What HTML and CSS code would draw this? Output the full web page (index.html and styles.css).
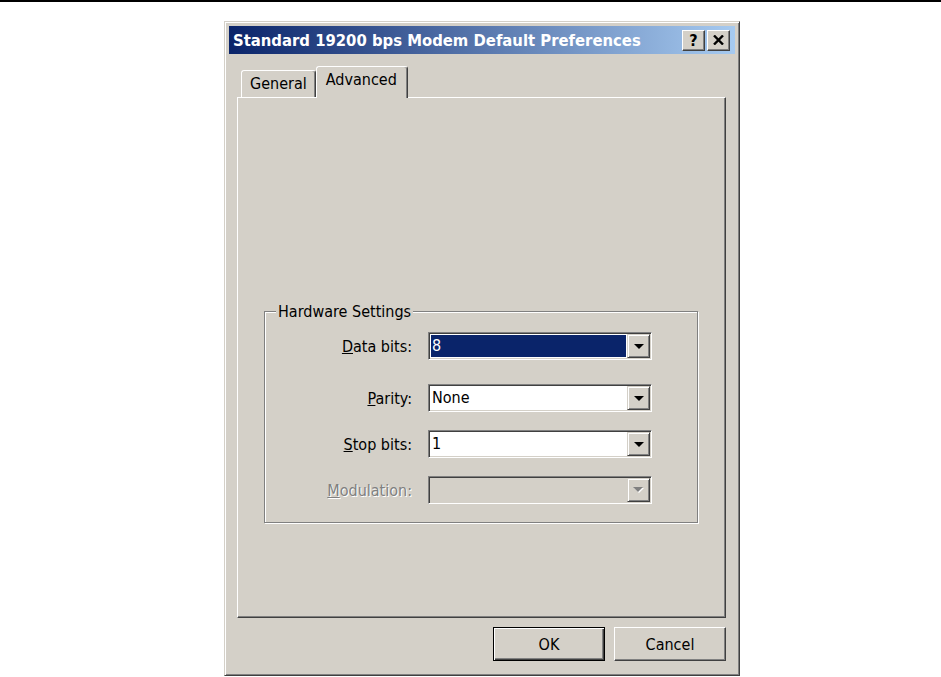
FILE: index.html
```html
<!DOCTYPE html>
<html lang="en">
<head>
    <meta charset="UTF-8">
    <title>Standard 19200 bps Modem Default Preferences</title>
    <link rel="stylesheet" href="styles.css">
</head>
<body>
    <div class="topline"></div>
    <div class="dialog">
        <div class="titlebar">
            <span class="title">Standard 19200 bps Modem Default Preferences</span>
            <div class="caption-btns">
                <div class="cap-btn">?</div>
                <div class="cap-btn">
                    <svg width="11" height="10" viewBox="0 0 11 10">
                        <path d="M1 0.5 L10 9.5 M10 0.5 L1 9.5" stroke="#000" stroke-width="2.4"/>
                    </svg>
                </div>
            </div>
        </div>
        <div class="content">
            <div class="tabs">
                <div class="tab">General</div>
                <div class="tab active">Advanced</div>
            </div>
            <div class="panel">
                <div class="group">
                    <span class="group-title">Hardware Settings</span>
                    <div class="fields">
                        <div class="row">
                            <label class="lbl"><u>D</u>ata bits:</label>
                            <div class="combo">
                                <div class="value selected">8</div>
                                <div class="arrow"><svg width="10" height="5" viewBox="0 0 10 5"><polygon points="0,0 10,0 5,5" fill="#000"/></svg></div>
                            </div>
                        </div>
                        <div class="row wide">
                            <label class="lbl"><u>P</u>arity:</label>
                            <div class="combo">
                                <div class="value">None</div>
                                <div class="arrow"><svg width="10" height="5" viewBox="0 0 10 5"><polygon points="0,0 10,0 5,5" fill="#000"/></svg></div>
                            </div>
                        </div>
                        <div class="row">
                            <label class="lbl"><u>S</u>top bits:</label>
                            <div class="combo">
                                <div class="value">1</div>
                                <div class="arrow"><svg width="10" height="5" viewBox="0 0 10 5"><polygon points="0,0 10,0 5,5" fill="#000"/></svg></div>
                            </div>
                        </div>
                        <div class="row">
                            <label class="lbl disabled"><u>M</u>odulation:</label>
                            <div class="combo disabled">
                                <div class="value"></div>
                                <div class="arrow"><svg width="11" height="6" viewBox="0 0 11 6"><polygon points="1,1 11,1 6,6" fill="#fff"/><polygon points="0,0 10,0 5,5" fill="#808080"/></svg></div>
                            </div>
                        </div>
                    </div>
                </div>
            </div>
            <div class="buttons">
                <button class="btn default">OK</button>
                <button class="btn">Cancel</button>
            </div>
        </div>
    </div>
</body>
</html>
```

FILE: styles.css
```css
body {
    margin: 0;
    background: #fff;
    font-family: "DejaVu Sans Condensed", "DejaVu Sans", "Liberation Sans", sans-serif;
    font-size: 16px;
    color: #000;
}
.topline {
    height: 2px;
    background: #000;
}
.dialog {
    width: 516px;
    height: 655px;
    margin: 19px 0 0 224px;
    box-sizing: border-box;
    padding: 4px;
    background: #d4d0c8;
    border: 1px solid;
    border-color: #d4d0c8 #404040 #404040 #d4d0c8;
    box-shadow: inset 1px 1px #fff, inset -1px -1px #808080;
}
/* title bar */
.titlebar {
    display: flex;
    align-items: center;
    justify-content: space-between;
    height: 28px;
    padding: 0 5px 0 4px;
    background: linear-gradient(to right, #0a246a, #a6caf0);
    color: #fff;
    font-weight: bold;
    font-size: 16.5px;
}
.caption-btns {
    display: flex;
    gap: 2px;
}
.cap-btn {
    display: flex;
    align-items: center;
    justify-content: center;
    width: 23px;
    height: 21px;
    box-sizing: border-box;
    background: #d4d0c8;
    border: 1px solid;
    border-color: #fff #404040 #404040 #fff;
    box-shadow: inset -1px -1px #808080;
    color: #000;
    font-size: 16px;
    font-weight: bold;
}
/* body */
.content {
    padding: 12px 9px 0 8px;
}
.tabs {
    display: flex;
    align-items: flex-end;
    padding-left: 4px;
    position: relative;
    z-index: 1;
}
.tab {
    box-sizing: border-box;
    height: 27px;
    padding: 3px 8px 0 8px;
    border: 1px solid;
    border-bottom: none;
    border-color: #fff #404040 transparent #fff;
    border-radius: 3px 3px 0 0;
    box-shadow: inset -1px 0 #808080;
    background: #d4d0c8;
}
.tab.active {
    height: 32px;
    margin-bottom: -1px;
    padding: 3px 10px 0 9px;
}
.panel {
    height: 521px;
    box-sizing: border-box;
    padding: 213px 27px 0 26px;
    border: 1px solid;
    border-color: #fff #404040 #404040 #fff;
    box-shadow: inset -1px -1px #808080;
}
/* group box */
.group {
    height: 212px;
    box-sizing: border-box;
    border: 1px solid #808080;
    box-shadow: inset 1px 1px #fff, 1px 1px #fff;
}
.group-title {
    display: inline-block;
    margin: -10px 0 0 11px;
    padding: 0 2px;
    line-height: 19px;
    background: #d4d0c8;
    vertical-align: top;
}
.fields {
    display: flex;
    flex-direction: column;
    gap: 18px;
    margin-top: 1px;
}
.row {
    display: flex;
    align-items: center;
    gap: 16px;
}
.row.wide {
    margin-top: 6px;
}
.lbl {
    width: 147px;
    text-align: right;
}
.lbl.disabled {
    color: #808080;
    text-shadow: 1px 1px #fff;
}
.combo {
    display: flex;
    width: 224px;
    height: 28px;
    box-sizing: border-box;
    padding: 1px;
    background: #fff;
    border: 1px solid;
    border-color: #808080 #fff #fff #808080;
    box-shadow: inset 1px 1px #404040, inset -1px -1px #d4d0c8;
}
.combo.disabled {
    background: #d4d0c8;
}
.value {
    flex: 1;
    padding-left: 2px;
    line-height: 24px;
}
.value.selected {
    margin: 1px;
    padding-left: 1px;
    line-height: 22px;
    background: #0a246a;
    color: #fff;
}
.arrow {
    display: flex;
    align-items: center;
    justify-content: center;
    width: 23px;
    box-sizing: border-box;
    background: #d4d0c8;
    border: 1px solid;
    border-color: #d4d0c8 #404040 #404040 #d4d0c8;
    box-shadow: inset 1px 1px #fff, inset -1px -1px #808080;
}
/* bottom buttons */
.buttons {
    display: flex;
    justify-content: flex-end;
    gap: 9px;
    margin-top: 9px;
}
.btn {
    width: 112px;
    height: 34px;
    padding: 0;
    font: inherit;
    color: #000;
    background: #d4d0c8;
    border: 1px solid;
    border-color: #fff #404040 #404040 #fff;
    box-shadow: inset -1px -1px #808080;
}
.btn.default {
    border-color: #000;
    box-shadow: inset 1px 1px #fff, inset -1px -1px #404040, inset -2px -2px #808080;
}
```
